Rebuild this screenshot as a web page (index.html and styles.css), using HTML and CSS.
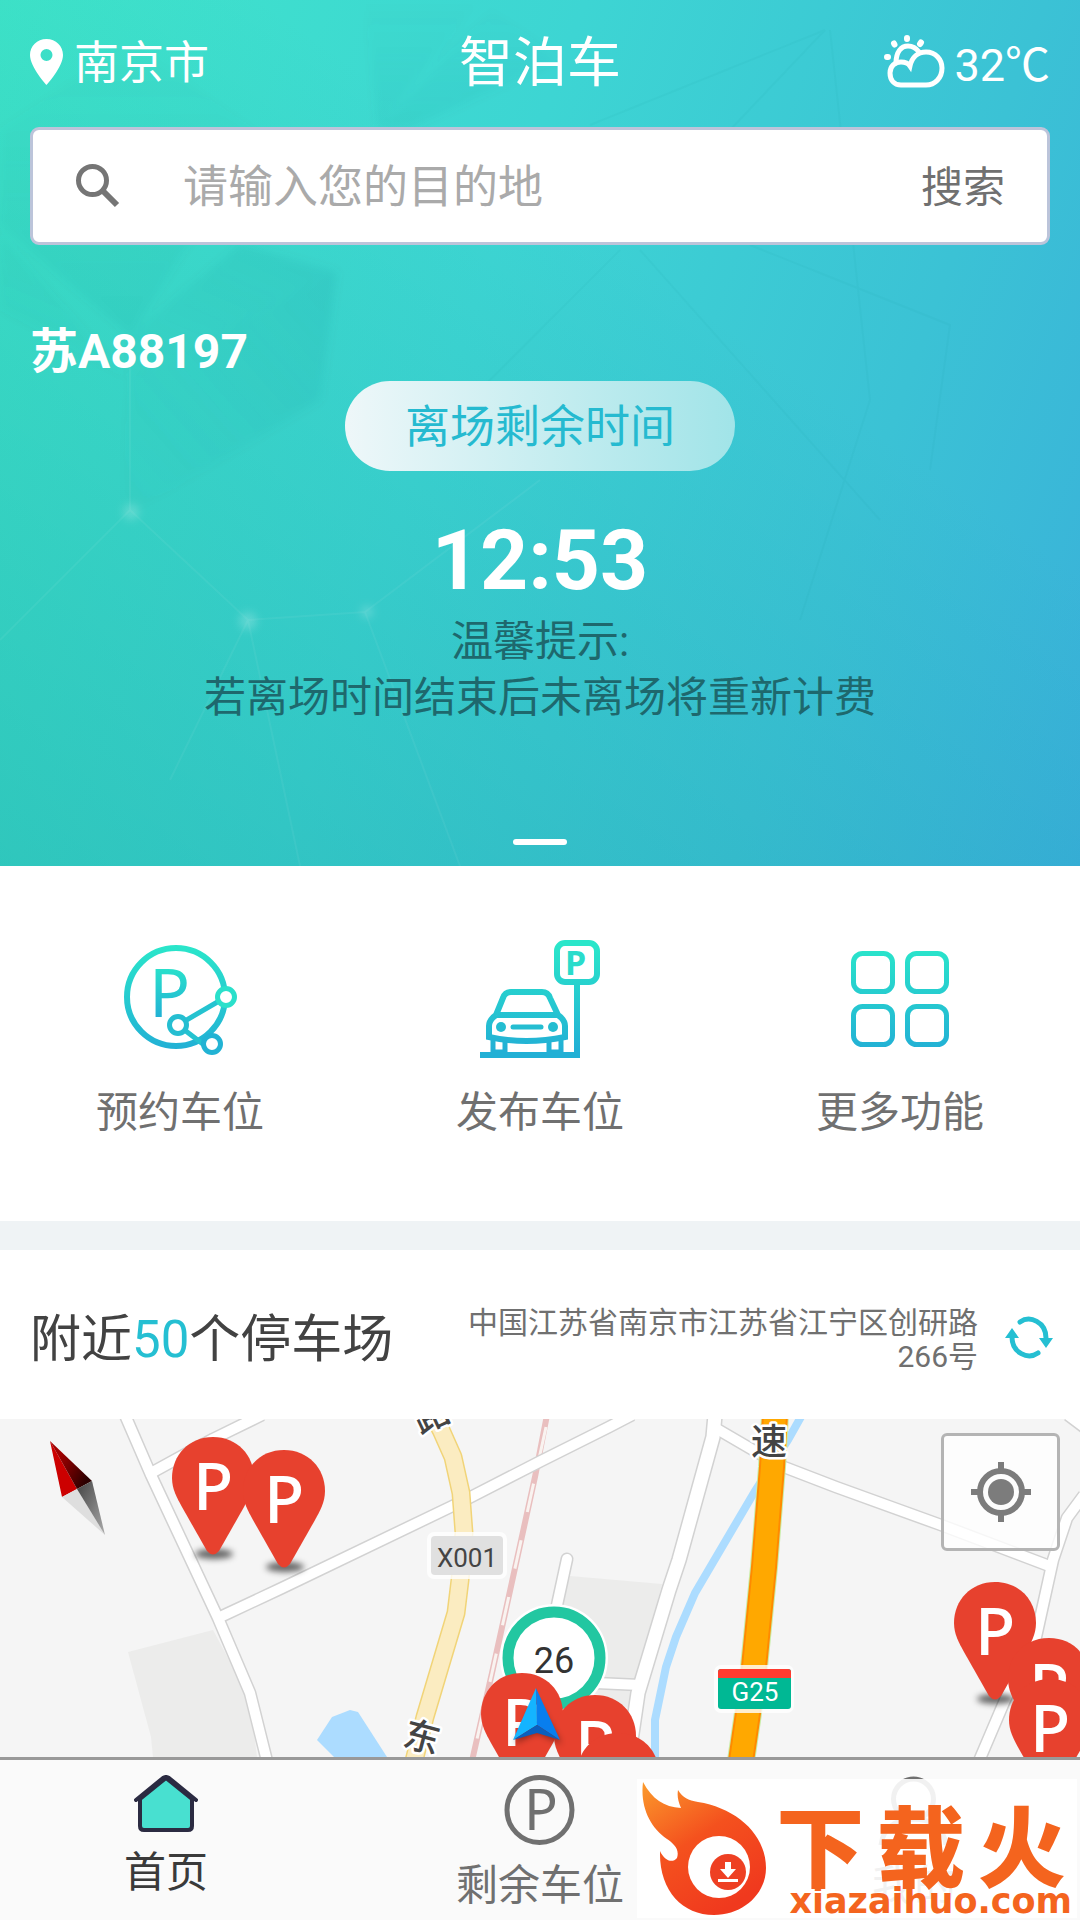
FILE: index.html
```html
<!DOCTYPE html>
<html lang="zh-CN">
<head>
    <meta charset="utf-8">
    <meta name="viewport" content="width=device-width, initial-scale=1">
    <title>智泊车</title>
    <link rel="stylesheet" href="styles.css">
</head>
<body>
    <section class="hero">
        <svg class="hero-bg" viewBox="0 0 1080 866" preserveAspectRatio="none" aria-hidden="true">
            <defs>
                <linearGradient id="shade" x1="0" y1="0" x2="0" y2="1">
                    <stop offset="0" stop-color="#067a80" stop-opacity="0"/>
                    <stop offset="1" stop-color="#067a80" stop-opacity=".07"/>
                </linearGradient>
                <linearGradient id="shade2" x1="0" y1="1" x2="1" y2="0">
                    <stop offset="0" stop-color="#067a80" stop-opacity="0"/>
                    <stop offset="1" stop-color="#067a80" stop-opacity=".1"/>
                </linearGradient>
                <filter id="facet" x="-10%" y="-10%" width="120%" height="120%">
                    <feGaussianBlur stdDeviation="4"/>
                </filter>
            </defs>
            <g filter="url(#facet)">
                <path fill="url(#shade)" d="M130 40L260 135L130 335L0 225L0 130Z"/>
                <path fill="url(#shade2)" d="M130 380L337 272L320 400L120 520Z"/>
                <path fill="url(#shade)" d="M365 0L378 128L500 0ZM378 128L480 0L560 60L410 128Z"/>
                <path fill="url(#shade2)" d="M0 235L130 380L0 310ZM130 335L240 245L337 272L130 380Z"/>
            </g>
            <path fill="none" stroke="#067a80" stroke-opacity=".04" stroke-width="2" d="M590 125L825 30L730 130M830 30L870 400M750 245L950 325L930 470M640 250L880 520M620 250L400 470M870 400L800 620"/>
            <path fill="none" stroke="#fff" stroke-opacity=".05" stroke-width="2" d="M130 340V510L0 640M130 510L248 620L170 780M248 620L365 612L540 480M248 620L300 866M365 612L460 866"/>
            <g fill="#fff" fill-opacity=".2" filter="url(#facet)">
                <circle cx="131" cy="512" r="8"/>
                <circle cx="248" cy="621" r="9"/>
                <circle cx="367" cy="612" r="6"/>
            </g>
        </svg>

        <header class="topbar">
            <a class="city" href="#">
                <svg width="33" height="46" viewBox="0 0 33 46" aria-hidden="true">
                    <path fill="#fff" fill-rule="evenodd" d="M16.500 0C7 0 0 7 0 16C0 28 16.500 46 16.500 46S33 28 33 16C33 7 26 0 16.500 0ZM16.500 10a6 6 0 1 1 0 12a6 6 0 0 1 0-12Z"/>
                </svg>
                <span>南京市</span>
            </a>
            <h1 class="app-title">智泊车</h1>
            <div class="weather">
                <svg width="62" height="54" viewBox="0 0 62 54" fill="none" stroke="#fff" stroke-width="5" stroke-linecap="round" aria-hidden="true">
                    <path d="M17 50C10 50 6 45 6 38C6 31 11 27 17 27C21 27 24 28 26 31C28 22 34 17 42 17C52 17 58 25 58 33C58 43 51 50 42 50Z"/>
                    <path d="M12 28C12 17 17 11 24 11C29 11 32 13 35 17"/>
                    <path stroke-width="6" d="M3 22H4M10 8.500L10.500 9.500M23 3V4M37 7.500L36 9"/>
                </svg>
                <span class="degree">32<span>℃</span></span>
            </div>
        </header>

        <form class="search" onsubmit="return false">
            <svg width="44" height="44" viewBox="0 0 44 44" fill="none" stroke="#757575" aria-hidden="true">
                <circle cx="16.500" cy="16.500" r="14" stroke-width="5"/>
                <path stroke-width="6" d="M27 27L41 41"/>
            </svg>
            <input type="text" aria-label="目的地" placeholder="请输入您的目的地">
            <button type="submit">搜索</button>
        </form>

        <div class="plate">苏A88197</div>
        <div class="timer">
            <span class="pill">离场剩余时间</span>
            <strong class="time">12:53</strong>
            <p class="tips">温馨提示:<br>若离场时间结束后未离场将重新计费</p>
        </div>
        <div class="indicator"></div>
    </section>

    <section class="functions">
        <a class="func" href="#">
            <svg width="120" height="120" viewBox="0 0 120 120" fill="none" stroke-width="6" aria-hidden="true">
                <defs>
                    <linearGradient id="teal" gradientUnits="userSpaceOnUse" x1="0" y1="5" x2="0" y2="110">
                        <stop offset="0" stop-color="#2ae6ca"/>
                        <stop offset="1" stop-color="#22b0d5"/>
                    </linearGradient>
                    <linearGradient id="tealText" x1="0" y1="0" x2="0" y2="1">
                        <stop offset=".2" stop-color="#2ae6ca"/>
                        <stop offset=".8" stop-color="#22b0d5"/>
                    </linearGradient>
                </defs>
                <circle cx="56" cy="57" r="49" stroke="url(#teal)"/>
                <text class="sign-p" x="29" y="77" font-size="68" fill="url(#tealText)">P</text>
                <path stroke="#25c3d0" stroke-width="5" d="M58 85L106 57M58 85L92 111"/>
                <circle cx="106" cy="57" r="8.500" fill="#fff" stroke="#2ae0cb" stroke-width="5"/>
                <circle cx="58" cy="85" r="8.500" fill="#fff" stroke="#25bed1" stroke-width="5"/>
                <circle cx="92" cy="104" r="8.500" fill="#fff" stroke="#22b3d4" stroke-width="5"/>
            </svg>
            <span>预约车位</span>
        </a>
        <a class="func" href="#">
            <svg width="120" height="120" viewBox="0 0 120 120" fill="none" stroke="url(#teal)" stroke-width="6" aria-hidden="true">
                <rect x="77" y="3" width="40" height="39" rx="8"/>
                <text class="sign-p" x="85" y="35" font-size="34" font-weight="700" stroke="none" fill="#2adccb">P</text>
                <path d="M97 43V115H0"/>
                <path d="M16 75L23 58Q25 52 31 52H62Q68 52 70 58L78 75M16 75H78M16 75Q9 80 9 86V97Q46 105 85 97V86Q85 80 78 75"/>
                <path d="M13 98V112H25V101M69 101V112H81V98" stroke-width="5"/>
                <circle cx="21" cy="87" r="5" fill="#24bdd1" stroke="none"/>
                <circle cx="73" cy="87" r="5" fill="#24bdd1" stroke="none"/>
                <path stroke="#24bdd1" stroke-width="5" stroke-linecap="round" d="M33 87H61"/>
            </svg>
            <span>发布车位</span>
        </a>
        <a class="func" href="#">
            <svg width="120" height="120" viewBox="0 0 120 120" fill="none" stroke="url(#teal)" stroke-width="5" aria-hidden="true">
                <rect x="13.500" y="13.500" width="39" height="38" rx="9"/>
                <rect x="67.500" y="13.500" width="39" height="38" rx="9"/>
                <rect x="13.500" y="66.500" width="39" height="38" rx="9"/>
                <rect x="67.500" y="66.500" width="39" height="38" rx="9"/>
            </svg>
            <span>更多功能</span>
        </a>
    </section>

    <section class="nearby">
        <h2>附近<em>50</em>个停车场</h2>
        <p class="address">中国江苏省南京市江苏省江宁区创研路266号</p>
        <button class="refresh" type="button" aria-label="刷新">
            <svg width="48" height="44" viewBox="0 0 48 44" fill="none" stroke="#25bfd2" stroke-width="5" stroke-linecap="round" aria-hidden="true">
                <path d="M15 6C25 -1 41 6 41 22M33 37C23 44 7 37 7 21"/>
                <path fill="#25bfd2" stroke="none" d="M34 22H48L41 32ZM0 22H14L7 12Z"/>
            </svg>
        </button>
    </section>

    <section class="map">
        <svg class="map-canvas" viewBox="0 0 1080 338" preserveAspectRatio="xMidYMin slice" aria-label="附近停车场地图">
            <defs>
                <filter id="soft" x="-30%" y="-80%" width="160%" height="260%">
                    <feGaussianBlur stdDeviation="3"/>
                </filter>
                <linearGradient id="needleRed" x1="0" y1="0" x2="1" y2=".6">
                    <stop offset=".3" stop-color="#a00000"/>
                    <stop offset="1" stop-color="#2c0000"/>
                </linearGradient>
                <linearGradient id="needleGray" x1="0" y1="0" x2="1" y2="1">
                    <stop offset="0" stop-color="#444"/>
                    <stop offset="1" stop-color="#aaa"/>
                </linearGradient>
                <!-- origin is the top centre of the pin -->
                <g id="pin">
                    <ellipse cx="1" cy="117" rx="19" ry="5" fill="#000" fill-opacity=".6" filter="url(#soft)"/>
                    <path fill="#e7412e" d="M0 0C-24 0-41 18-41 41C-41 52-36 61-31 70L-6 114Q0 121 6 114L31 70C36 61 41 52 41 41C41 18 24 0 0 0Z"/>
                    <text class="sign-p" x="-20" y="73" font-size="66" font-weight="500" fill="#fff">P</text>
                </g>
                <g id="roads" fill="none" stroke-linejoin="round">
                    <path d="M125 -4L151 56L218 199L250 274L260 314L267 342"/>
                    <path d="M151 54L213 20L262 -4"/>
                    <path d="M218 199L282 169L465 81L541 42L609 8L632 -4"/>
                    <path d="M717 10L753 31L784 48L836 68L941 106L1052 148"/>
                    <path d="M1084 76L1067 99L1053 141L1036 218L1005 281L979 342"/>
                    <path d="M567 140L554 200" stroke-linecap="round"/>
                    <path d="M596 264L640 266"/>
                    <path d="M1068 -4L1084 8"/>
                </g>
                <path id="mainroad" fill="none" stroke-linejoin="round" d="M715 -4L713 18L679 141L669 171L638 274L628 342"/>
                <path id="x001" fill="none" stroke-linejoin="round" d="M432 -6L441 11L453 38L461 74L464 114L460 161L456 194L425 298L414 342"/>
                <path id="g25" fill="none" stroke-linejoin="round" d="M775 -4L772 48L764 148L753 258L747 301L741 342"/>
            </defs>

            <rect width="1080" height="338" fill="#f5f5f5"/>
            <path fill="#ececeb" d="M128 233L213 211L250 280L257 338H153L151 318ZM570 157L662 165L630 290L558 258V195Z"/>
            <path fill="#acdcff" d="M332 298L350 291L358 293L387 338H334L317 321Z"/>
            <path fill="none" stroke="#acdcff" stroke-width="8" d="M802 -4L788 21L755 72L695 174L676 218L666 248L655 301V342"/>
            <path fill="none" stroke="#e9bfbf" stroke-width="6" d="M547 -4L535 58L492 254L472 342"/>
            <path fill="none" stroke="#f9f3f0" stroke-width="3" stroke-dasharray="29 29" d="M546 8L535 58L492 254L472 342"/>
            <use href="#roads" stroke="#d2d2d2" stroke-width="13"/>
            <use href="#mainroad" stroke="#d2d2d2" stroke-width="16"/>
            <use href="#roads" stroke="#fff" stroke-width="10"/>
            <use href="#mainroad" stroke="#fff" stroke-width="13"/>
            <use href="#x001" stroke="#f1d478" stroke-width="19"/>
            <use href="#x001" stroke="#fbecc1" stroke-width="16"/>
            <use href="#g25" stroke="#c8eda6" stroke-width="28"/>
            <use href="#g25" stroke="#ff8a00" stroke-width="26"/>
            <use href="#g25" stroke="#ffa800" stroke-width="22"/>

            <g class="road-name" font-size="36">
                <text x="431" y="9" transform="rotate(-25 431 -4)">路</text>
                <text x="422" y="331" transform="rotate(15 422 318)">东</text>
                <text x="769" y="36">速</text>
            </g>

            <g class="road-sign" font-size="26">
                <rect x="427" y="113" width="80" height="47" rx="7" fill="#fff" fill-opacity=".8"/>
                <rect x="431" y="117" width="72" height="39" rx="4" fill="#e0e0e0"/>
                <text x="467" y="148" fill="#444">X001</text>
                <rect x="714" y="246" width="80" height="48" rx="7" fill="#fff" fill-opacity=".8"/>
                <rect x="718" y="250" width="73" height="40" rx="3" fill="#00b894"/>
                <path fill="#ff3b30" d="M718 259V253Q718 250 721 250H788Q791 250 791 253V259Z"/>
                <text x="755" y="282" fill="#fff">G25</text>
            </g>

            <circle cx="554" cy="239" r="54" fill="#fff"/>
            <circle cx="554" cy="239" r="46" fill="#fff" stroke="#22c7a1" stroke-width="11"/>
            <text class="cluster" x="554" y="254" font-size="36">26</text>

            <use href="#pin" x="213" y="18"/>
            <use href="#pin" x="284" y="31"/>
            <use href="#pin" x="995" y="163"/>
            <use href="#pin" x="1049" y="219"/>
            <use href="#pin" x="1050" y="260"/>
            <use href="#pin" x="522" y="254"/>
            <use href="#pin" x="595" y="276"/>
            <use href="#pin" x="618" y="314"/>

            <path fill="#000" fill-opacity=".4" filter="url(#soft)" d="M536 280L562 325L537 314L514 325Z"/>
            <path fill="#14b4ff" d="M536 269L513 321L537 306Z"/>
            <path fill="#087eee" d="M536 269L560 321L537 306Z"/>
            <path fill="#0a5fbe" d="M513 321L537 306L560 321L537 314Z"/>

            <path fill="#cc0000" d="M50 22L62 78L77 70Z"/>
            <path fill="url(#needleRed)" d="M50 22L92 62L77 70Z"/>
            <path fill="#dedede" d="M62 78L77 70L105 116Z"/>
            <path fill="url(#needleGray)" d="M92 62L77 70L105 116Z"/>
        </svg>
        <button class="locate" type="button" aria-label="定位">
            <svg width="60" height="60" viewBox="0 0 60 60" fill="none" stroke="#7c7c7c" stroke-width="6" aria-hidden="true">
                <circle cx="30" cy="30" r="21"/>
                <circle cx="30" cy="30" r="13" fill="#7c7c7c" stroke="none"/>
                <path d="M30 0V9M30 51V60M0 30H9M51 30H60"/>
            </svg>
        </button>
    </section>

    <nav class="tabbar">
        <a class="tab active" href="#">
            <svg width="64" height="57" viewBox="0 0 64 57" stroke="#2b2b42" stroke-width="4" stroke-linejoin="round" stroke-linecap="round" aria-hidden="true">
                <path fill="#48e0d0" d="M6 24V51Q6 55 10 55H54Q58 55 58 51V24L32 3Z"/>
                <path fill="none" d="M2 25L29 3Q32 1 35 3L62 25"/>
            </svg>
            <span>首页</span>
        </a>
        <a class="tab" href="#">
            <svg width="71" height="70" viewBox="0 0 71 70" aria-hidden="true">
                <circle cx="35.500" cy="35" r="32.500" fill="none" stroke="#707070" stroke-width="5"/>
                <text class="sign-p" x="20" y="55" font-size="56" fill="#707070">P</text>
            </svg>
            <span>剩余车位</span>
        </a>
        <a class="tab" href="#">
            <svg width="71" height="70" viewBox="0 0 71 70" fill="none" stroke="#707070" stroke-width="5" aria-hidden="true">
                <circle cx="35.500" cy="24" r="20"/>
                <path d="M3 70C5 53 18 44 35.500 44S66 53 68 70"/>
            </svg>
            <span>我的</span>
        </a>

        <div class="brand">
            <svg class="brand-mark" width="126" height="136" viewBox="0 0 126 136" aria-hidden="true">
                <defs>
                    <linearGradient id="fire" x1="0" y1="0" x2=".6" y2="1">
                        <stop offset="0" stop-color="#fb9a2c"/>
                        <stop offset=".5" stop-color="#f4511e"/>
                        <stop offset="1" stop-color="#f0391e"/>
                    </linearGradient>
                </defs>
                <path fill="url(#fire)" d="M1 1C10 18 22 26 39 27C36 20 35 15 36 9C41 17 46 19 56 21C94 27 124 53 124 87C124 113 101 134 72 134C40 134 17 109 18 70C22 79 30 83 35 77C38 68 31 62 25 58C8 46-2 26 1 1Z"/>
                <circle cx="77" cy="86" r="31" fill="#fff"/>
                <circle cx="86" cy="91" r="18" fill="#ee4023"/>
                <path fill="#fff" d="M83 81H89V88H94L86 97L78 88H83ZM76 98H96V101H76Z"/>
            </svg>
            <div class="brand-text">
                <div class="brand-name"><span>下</span><span>载</span><span>火</span></div>
                <div class="brand-url">xiazaihuo.com</div>
            </div>
        </div>
    </nav>
</body>
</html>
```
FILE: styles.css
```css
* {
  box-sizing: border-box;
}

body {
  display: flex;
  flex-direction: column;
  min-height: 100vh;
  margin: 0;
  font-family: Roboto, "Noto Sans CJK SC", sans-serif;
  background-color: #fff;
  color: #707070;
}

svg {
  display: block;
  flex: none;
}

a {
  color: inherit;
  text-decoration: none;
}

button {
  padding: 0;
  border: none;
  background: none;
  font: inherit;
  color: inherit;
  cursor: pointer;
}

.sign-p {
  font-family: "Noto Sans", sans-serif;
}

.hero {
  position: relative;
  padding: 0 30px 21px;
  background: linear-gradient(35deg, rgba(0, 130, 130, 0.24), rgba(0, 130, 130, 0) 65%),
    linear-gradient(110deg, #3fe5ca 0%, #3dd5d3 42%, #3bc2d5 75%, #39b0da 100%);
}

.hero > * {
  position: relative;
}

.hero > .hero-bg {
  position: absolute;
  top: 0;
  left: 0;
  width: 100%;
  height: 100%;
}

.topbar {
  display: grid;
  grid-template-columns: 1fr auto 1fr;
  align-items: center;
  height: 127px;
  font-size: 45px;
  line-height: 60px;
  color: #fff;
}

.topbar svg {
  margin-bottom: 4px;
}

.city {
  display: flex;
  align-items: center;
  gap: 11px;
}

.app-title {
  margin: 0;
  font-size: 54px;
  font-weight: 400;
}

.weather {
  display: flex;
  justify-content: flex-end;
  align-items: center;
  gap: 8px;
}

.degree span {
  font-family: "Noto Sans CJK SC", sans-serif;
}

.search {
  display: flex;
  align-items: center;
  height: 118px;
  padding: 0 42px 0 43px;
  border: 3px solid #bcc4da;
  border-radius: 9px;
  background-color: #fff;
}

.search input {
  flex: 1;
  min-width: 0;
  height: 60px;
  margin-left: 63px;
  padding: 2px 0 0;
  border: none;
  outline: none;
  background: none;
  font: inherit;
  font-size: 45px;
  color: #444;
}

.search input::placeholder {
  color: #aaa;
}

.search button {
  padding-top: 3px;
  font-size: 42px;
  line-height: 60px;
}

.plate {
  padding-top: 78px;
  font-size: 48px;
  font-weight: 700;
  line-height: 58px;
  color: #fff;
}

.timer {
  display: flex;
  flex-direction: column;
  align-items: center;
}

.pill {
  padding: 3px 60px 0;
  border-radius: 45px;
  background: linear-gradient(to right, #eef7f9, #a1e4e8);
  font-size: 45px;
  line-height: 87px;
  color: #25bad0;
}

.time {
  margin-top: 40px;
  font-size: 84px;
  font-weight: 700;
  line-height: 100px;
  color: #fff;
}

.tips {
  margin: 3px 0 0;
  font-size: 42px;
  line-height: 56px;
  text-align: center;
  color: #1e686d;
}

.indicator {
  width: 54px;
  height: 6px;
  margin: 113px auto 0;
  border-radius: 3px;
  background-color: #fff;
}

.functions {
  display: flex;
  padding: 74px 0 78px;
  border-bottom: 29px solid #eff3f5;
}

.func {
  flex: 1;
  display: flex;
  flex-direction: column;
  align-items: center;
  gap: 23px;
  font-size: 42px;
  line-height: 60px;
}

.nearby {
  display: flex;
  align-items: center;
  height: 169px;
  padding: 10px 27px 0 30px;
}

.nearby h2 {
  margin: 0;
  font-size: 51px;
  font-weight: 400;
  line-height: 60px;
  white-space: nowrap;
  color: #424242;
}

.nearby em {
  font-style: normal;
  color: #25bfd2;
}

.address {
  flex: 1;
  margin: 0 27px 0 60px;
  font-size: 30px;
  line-height: 34px;
  text-align: right;
}

.refresh {
  padding-bottom: 4px;
}

.map {
  position: relative;
  flex: 1;
  min-height: 338px;
  background-color: #f5f5f5;
}

.map-canvas {
  position: absolute;
  width: 100%;
  height: 100%;
}

.road-name {
  text-anchor: middle;
  font-weight: 500;
  fill: #444;
  stroke: #fff;
  stroke-width: 5px;
  stroke-linejoin: round;
  paint-order: stroke;
}

.road-sign,
.cluster {
  text-anchor: middle;
}

.cluster {
  fill: #333;
}

.locate {
  position: absolute;
  top: 14px;
  right: 20px;
  display: flex;
  align-items: center;
  justify-content: center;
  width: 119px;
  height: 118px;
  border: 3px solid #b4b4b4;
  border-radius: 6px;
  background-color: rgba(255, 255, 255, 0.8);
}

.tabbar {
  position: relative;
  display: flex;
  justify-content: space-around;
  height: 163px;
  border-top: 3px solid #999;
  background-color: #fafafa;
}

.tab {
  display: flex;
  flex-direction: column;
  align-items: center;
  gap: 11px;
  padding-top: 15px;
  font-size: 42px;
  line-height: 60px;
}

.tab.active {
  color: #3a3a3a;
}

.brand {
  position: absolute;
  right: 3px;
  bottom: 2px;
  display: flex;
  gap: 2px;
  width: 440px;
  height: 139px;
  padding: 2px 5px 0;
  background-color: rgba(255, 255, 255, 0.9);
  color: #f4641e;
}

.brand-text {
  flex: 1;
  padding-top: 34px;
}

.brand-name {
  display: flex;
  justify-content: space-around;
  font-size: 88px;
  font-weight: 900;
  line-height: 70px;
}

.brand-url {
  font-family: "DejaVu Sans", sans-serif;
  font-size: 35px;
  font-weight: 700;
  line-height: 32px;
  text-align: right;
}
```
